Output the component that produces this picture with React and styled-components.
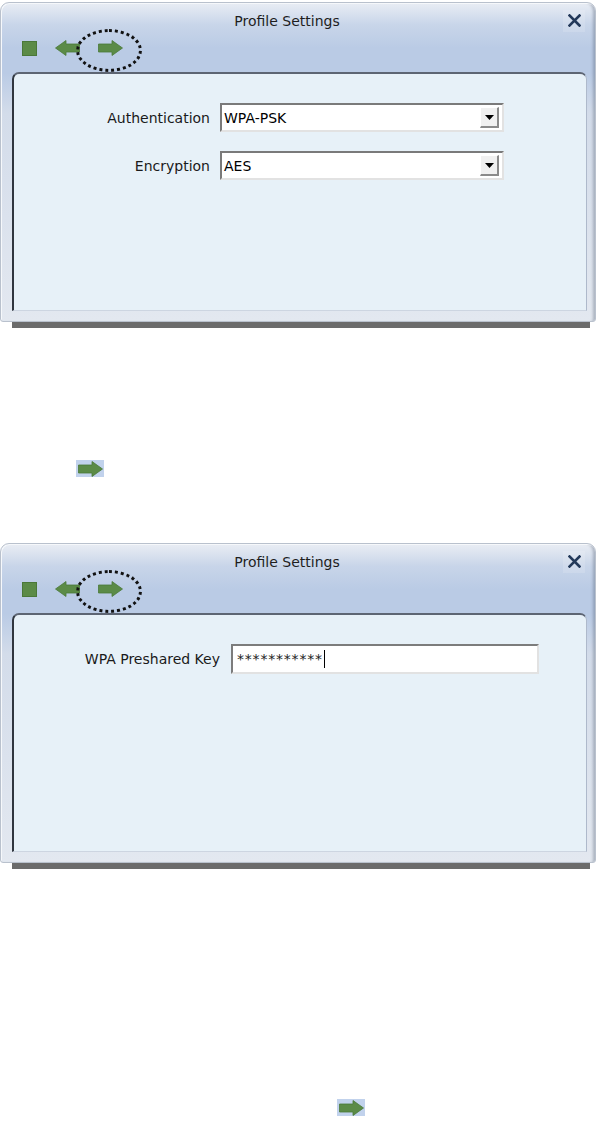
import React from "react";
import styled, { createGlobalStyle } from "styled-components";

const frame = {
  panel: "#e7f1f8",
  bar: "#bccde6",
  arrow: "#5b8b47",
  arrowDark: "#4a7838",
};

const GlobalStyle = createGlobalStyle`
  html, body { margin: 0; padding: 0; background: #ffffff; }
  body { font-family: "DejaVu Sans", Verdana, sans-serif; color: #1a1a1a; }
`;

//#region Styled Components
const Page = styled.div`
  width: 599px;
  display: flex;
  flex-direction: column;
`;

const WindowWrap = styled.div`
  margin-top: ${({ $top }) => $top}px;
  display: flex;
  flex-direction: column;
`;

const Window = styled.div`
  position: relative;
  width: 596px;
  height: 320px;
  box-sizing: border-box;
  display: flex;
  flex-direction: column;
  border: 1px solid #b9c1cd;
  border-radius: 9px 9px 3px 3px;
  background: linear-gradient(
    180deg,
    #e9edf4 0px,
    #c8d5e9 22px,
    #bacbe5 45px,
    #bacbe5 70px,
    #d3dcea 110px,
    #e3e8f0 100%
  );
  box-shadow: inset 1px 1px 0 #f6f8fb, inset -4px 0 3px -2px rgba(70, 80, 100, 0.35);
`;

const WindowShadow = styled.div`
  height: 6px;
  margin: 0 9px 0 12px;
  background: #6b6b6b;
`;

const TitleBar = styled.div`
  height: 33px;
  padding-right: 22px;
  display: grid;
  grid-template-columns: 1fr auto 1fr;
  align-items: center;
`;

const Title = styled.div`
  grid-column: 2;
  font-size: 14px;
  color: #1e1e1e;
  padding-top: 2px;
`;

const CloseButton = styled.div`
  grid-column: 3;
  justify-self: end;
  width: 22px;
  height: 22px;
  margin-right: -12px;
  margin-top: 2px;
  display: flex;
  align-items: center;
  justify-content: center;
  background: rgba(255, 255, 255, 0.14);
`;

const Toolbar = styled.div`
  position: relative;
  height: 24px;
  margin-bottom: 12px;
  padding-left: 21px;
  display: flex;
  align-items: center;
  gap: 18px;
`;

const StopIcon = styled.div`
  width: 15px;
  height: 15px;
  box-sizing: border-box;
  background: ${frame.arrow};
  border: 1px solid ${frame.arrowDark};
`;

const DottedRing = styled.div`
  position: absolute;
  left: 75px;
  top: -7px;
  width: 66px;
  height: 43px;
  box-sizing: border-box;
  border: 3px dotted #111;
  border-radius: 50%;
  pointer-events: none;
`;

const Panel = styled.div`
  flex: 1;
  margin: 0 8px 10px 11px;
  box-sizing: border-box;
  background: ${frame.panel};
  border-top: 2px solid #5d6573;
  border-left: 2px solid #30363f;
  border-right: 1px solid #aeb9cb;
  border-bottom: 1px solid #cdd5e1;
  border-radius: 7px 7px 0 0;
  padding-top: 29px;
`;

const Form = styled.div`
  display: grid;
  grid-template-columns: ${({ $labelWidth }) => $labelWidth}px ${({ $fieldWidth }) => $fieldWidth}px;
  column-gap: ${({ $gap }) => $gap}px;
  row-gap: 19px;
  align-items: center;
`;

const Label = styled.div`
  justify-self: end;
  font-size: 14px;
  color: #1a1a1a;
`;

const Select = styled.div`
  height: 29px;
  box-sizing: border-box;
  display: flex;
  align-items: center;
  background: #fff;
  border-top: 2px solid #7a7a7a;
  border-left: 2px solid #7a7a7a;
  border-bottom: 2px solid #e2e2e2;
  border-right: 2px solid #e2e2e2;
  padding-left: 2px;
  font-size: 14px;
  color: #000;
`;

const SelectText = styled.span`
  flex: 1;
`;

const DropButton = styled.div`
  width: 19px;
  height: 21px;
  margin-right: 3px;
  box-sizing: border-box;
  display: flex;
  align-items: center;
  justify-content: center;
  background: #f0f0f0;
  border-top: 1px solid #ffffff;
  border-left: 1px solid #ffffff;
  border-right: 2px solid #8a8a8a;
  border-bottom: 2px solid #8a8a8a;
`;

const TextInput = styled.div`
  height: 30px;
  box-sizing: border-box;
  display: flex;
  align-items: center;
  background: #fff;
  border-top: 2px solid #7c7c7c;
  border-left: 2px solid #7c7c7c;
  border-bottom: 2px solid #e2e2e2;
  border-right: 2px solid #e2e2e2;
  padding-left: 4px;
  font-size: 14px;
  letter-spacing: 0.8px;
  color: #222;
`;

const Caret = styled.span`
  width: 1px;
  height: 18px;
  margin-left: 1px;
  background: #000;
`;

const StepHint = styled.div`
  margin-top: ${({ $top }) => $top}px;
  margin-left: ${({ $left }) => $left}px;
  width: 28px;
  height: 17px;
  display: flex;
  align-items: center;
  justify-content: center;
  background: #c1d2ec;
`;
//#endregion Styled Components

function Arrow({ dir = "right" }) {
  return (
    <svg width="25" height="16" viewBox="0 0 25 16" style={{ transform: dir === "left" ? "scaleX(-1)" : "none" }}>
      <path d="M0.5 4 H14 V0.5 L24.5 8 L14 15.5 V12 H0.5 Z" fill={frame.arrow} stroke={frame.arrowDark} strokeWidth="0.8" />
    </svg>
  );
}

function CloseIcon() {
  return (
    <svg width="13" height="13" viewBox="0 0 13 13">
      <path d="M1.5 1.5 L11.5 11.5 M11.5 1.5 L1.5 11.5" stroke="#23395a" strokeWidth="2.6" strokeLinecap="square" />
    </svg>
  );
}

function DownTriangle() {
  return (
    <svg width="9" height="5" viewBox="0 0 9 5">
      <path d="M0 0 H9 L4.5 5 Z" fill="#000" />
    </svg>
  );
}

function ProfileWindow({ top, children }) {
  return (
    <WindowWrap $top={top}>
      <Window>
        <TitleBar>
          <Title>Profile Settings</Title>
          <CloseButton>
            <CloseIcon />
          </CloseButton>
        </TitleBar>
        <Toolbar>
          <StopIcon />
          <Arrow dir="left" />
          <Arrow dir="right" />
          <DottedRing />
        </Toolbar>
        <Panel>{children}</Panel>
      </Window>
      <WindowShadow />
    </WindowWrap>
  );
}

function SelectField({ value }) {
  return (
    <Select>
      <SelectText>{value}</SelectText>
      <DropButton>
        <DownTriangle />
      </DropButton>
    </Select>
  );
}

export default function App() {
  return (
    <Page>
      <GlobalStyle />
      <ProfileWindow top={2}>
        <Form $labelWidth={196} $gap={10} $fieldWidth={284}>
          <Label>Authentication</Label>
          <SelectField value="WPA-PSK" />
          <Label>Encryption</Label>
          <SelectField value="AES" />
        </Form>
      </ProfileWindow>

      <StepHint $top={132} $left={76}>
        <Arrow />
      </StepHint>

      <ProfileWindow top={66}>
        <Form $labelWidth={206} $gap={11} $fieldWidth={308}>
          <Label>WPA Preshared Key</Label>
          <TextInput>
            ***********
            <Caret />
          </TextInput>
        </Form>
      </ProfileWindow>

      <StepHint $top={230} $left={337}>
        <Arrow />
      </StepHint>
    </Page>
  );
}
